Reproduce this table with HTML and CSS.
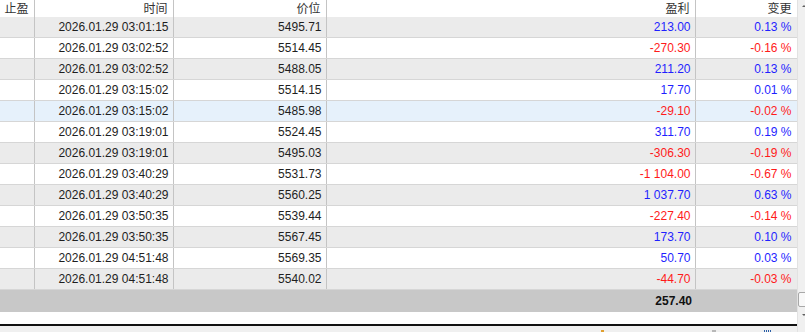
FILE: index.html
```html
<!DOCTYPE html>
<html lang="zh">
<head>
  <meta charset="UTF-8">
  <title>交易历史</title>
  <link rel="stylesheet" href="styles.css">
</head>
<body>
  <div class="frame">
    <div class="pane">
      <table class="deals">
        <colgroup>
          <col class="c-tp">
          <col class="c-time">
          <col class="c-price">
          <col class="c-profit">
          <col class="c-change">
        </colgroup>
        <thead>
          <tr>
            <th>止盈</th>
            <th>时间</th>
            <th>价位</th>
            <th>盈利</th>
            <th>变更</th>
          </tr>
        </thead>
        <tbody>
          <tr class="alt"><td></td><td>2026.01.29 03:01:15</td><td>5495.71</td><td class="up">213.00</td><td class="up">0.13 %</td></tr>
          <tr><td></td><td>2026.01.29 03:02:52</td><td>5514.45</td><td class="down">-270.30</td><td class="down">-0.16 %</td></tr>
          <tr class="alt"><td></td><td>2026.01.29 03:02:52</td><td>5488.05</td><td class="up">211.20</td><td class="up">0.13 %</td></tr>
          <tr><td></td><td>2026.01.29 03:15:02</td><td>5514.15</td><td class="up">17.70</td><td class="up">0.01 %</td></tr>
          <tr class="hover"><td></td><td>2026.01.29 03:15:02</td><td>5485.98</td><td class="down">-29.10</td><td class="down">-0.02 %</td></tr>
          <tr><td></td><td>2026.01.29 03:19:01</td><td>5524.45</td><td class="up">311.70</td><td class="up">0.19 %</td></tr>
          <tr class="alt"><td></td><td>2026.01.29 03:19:01</td><td>5495.03</td><td class="down">-306.30</td><td class="down">-0.19 %</td></tr>
          <tr><td></td><td>2026.01.29 03:40:29</td><td>5531.73</td><td class="down">-1 104.00</td><td class="down">-0.67 %</td></tr>
          <tr class="alt"><td></td><td>2026.01.29 03:40:29</td><td>5560.25</td><td class="up">1 037.70</td><td class="up">0.63 %</td></tr>
          <tr><td></td><td>2026.01.29 03:50:35</td><td>5539.44</td><td class="down">-227.40</td><td class="down">-0.14 %</td></tr>
          <tr class="alt"><td></td><td>2026.01.29 03:50:35</td><td>5567.45</td><td class="up">173.70</td><td class="up">0.10 %</td></tr>
          <tr><td></td><td>2026.01.29 04:51:48</td><td>5569.35</td><td class="up">50.70</td><td class="up">0.03 %</td></tr>
          <tr class="alt"><td></td><td>2026.01.29 04:51:48</td><td>5540.02</td><td class="down">-44.70</td><td class="down">-0.03 %</td></tr>
        </tbody>
        <tfoot>
          <tr><td></td><td></td><td></td><td>257.40</td><td></td></tr>
        </tfoot>
      </table>
      <div class="blank"></div>
      <div class="statusbar">
        <span class="mark orange"></span>
        <span class="mark grey"></span>
        <span class="mark bars"></span>
      </div>
    </div>
    <div class="scrollbar">
      <div class="arrow-up"></div>
      <div class="track"></div>
      <div class="thumb"></div>
      <div class="arrow-down"></div>
    </div>
  </div>
</body>
</html>
```

FILE: styles.css
```css
body {
  margin: 0;
  width: 805px;
  height: 332px;
  overflow: hidden;
  background: #fff;
  font-family: "Liberation Sans", "Noto Sans CJK SC", sans-serif;
  font-size: 12px;
  color: #1e1e1e;
}

.frame {
  display: flex;
  height: 332px;
}

.pane {
  width: 797px;
  display: flex;
  flex-direction: column;
}

.deals {
  width: 797px;
  table-layout: fixed;
  border-collapse: collapse;
}

.c-tp { width: 34px; }
.c-time { width: 139px; }
.c-price { width: 153px; }
.c-profit { width: 369px; }
.c-change { width: 102px; }

.deals th,
.deals td {
  text-align: right;
  padding: 0 4px 0 0;
  white-space: nowrap;
  overflow: hidden;
  border-right: 1px solid #c4c4c4;
}

.deals th {
  height: 17px;
  font-weight: normal;
  color: #333;
  font-family: "Noto Sans CJK SC", sans-serif;
  font-size: 12px;
  line-height: 15px;
  vertical-align: top;
  padding-right: 5px;
}

.deals td:last-child,
.deals th:last-child {
  padding-right: 5px;
}

.deals tbody td {
  height: 20px;
  border-bottom: 1px solid #d6d6d6;
  line-height: 20px;
}

.deals tbody tr.alt td { background: #ebebeb; }
.deals tbody tr.hover td { background: #e6f1fb; }

.deals td.up { color: #1f1fff; }
.deals td.down { color: #ff1a1a; }

.deals tfoot td {
  height: 22px;
  background: #c8c8c8;
  border-right: none;
  font-weight: bold;
  color: #111;
}

.deals tfoot td:nth-child(4) {
  padding-right: 3px;
}

.blank {
  flex: 1;
  background: #fff;
  border-bottom: 2px solid #111;
}

.statusbar {
  height: 6px;
  background: #f0f0f0;
  position: relative;
}

.mark {
  position: absolute;
  top: 4px;
  height: 2px;
}

.mark.orange { left: 601px; width: 3px; background: #e0a030; }
.mark.grey { left: 712px; width: 4px; background: #b8b8b8; }
.mark.bars {
  left: 764px;
  width: 7px;
  background: repeating-linear-gradient(90deg, #2a5fa8 0 1px, transparent 1px 2px);
}

.scrollbar {
  width: 8px;
  background: #f0f0f0;
  border-left: 1px solid #e2e2e2;
  position: relative;
}

.arrow-up {
  position: absolute;
  top: 5px;
  left: 4px;
  border-left: 2px solid transparent;
  border-right: 2px solid transparent;
  border-bottom: 2px solid #606060;
}

.thumb {
  position: absolute;
  top: 292px;
  left: 0;
  width: 10px;
  height: 13px;
  background: #f8f8f8;
  border: 1px solid #a8a8a8;
  border-radius: 2px;
}

.arrow-down {
  position: absolute;
  top: 314px;
  left: 4px;
  border-left: 2px solid transparent;
  border-right: 2px solid transparent;
  border-top: 2px solid #606060;
}
```
